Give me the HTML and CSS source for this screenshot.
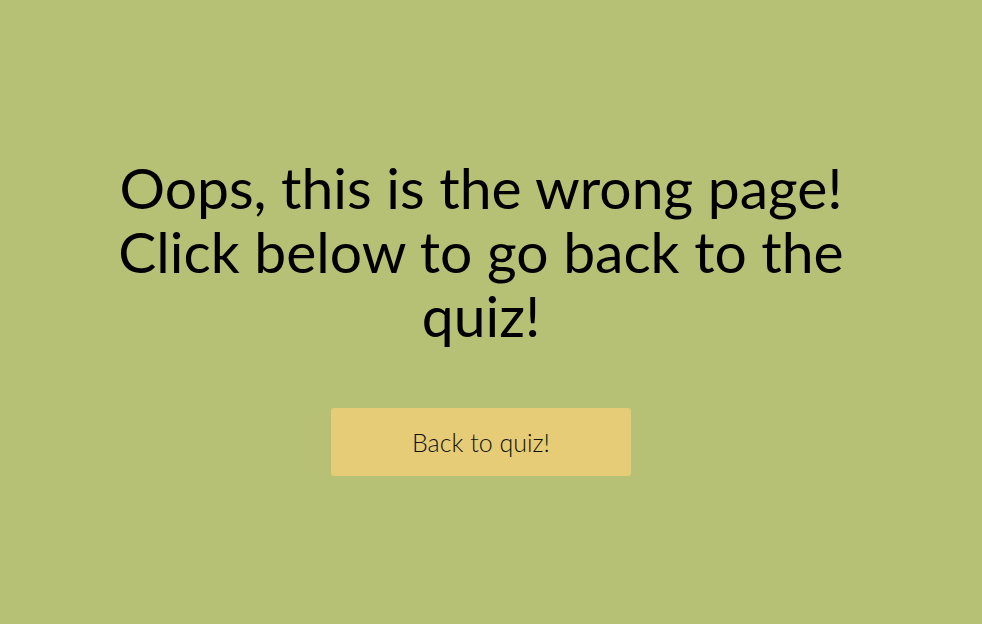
FILE: index.html
```html
<!DOCTYPE html>
<html lang="en">
<head>
<meta charset="utf-8">
<title>Wrong page</title>
<link rel="stylesheet" href="styles.css">
</head>
<body>
<main class="page">
  <h1 class="title">Oops, this is the wrong page! Click below to go back to the quiz!</h1>
  <a class="back-btn" href="#">Back to quiz!</a>
</main>
</body>
</html>
```

FILE: styles.css
```css
html, body {
  margin: 0;
  padding: 0;
  background: #b7c176;
  height: 100%;
}
body {
  font-family: Lato, "Noto Sans", sans-serif;
  color: #000;
}
.page {
  width: 962px;
  display: flex;
  flex-direction: column;
  align-items: center;
  padding-top: 155px;
}
.title {
  width: 760px;
  margin: 0;
  font-size: 57px;
  line-height: 64px;
  font-weight: 400;
  text-align: center;
}
.back-btn {
  margin-top: 61px;
  width: 300px;
  height: 68px;
  display: flex;
  align-items: center;
  justify-content: center;
  background: #e6cc77;
  border-radius: 3px;
  color: #111;
  text-decoration: none;
  font-size: 25px;
  font-weight: 300;
}
```
